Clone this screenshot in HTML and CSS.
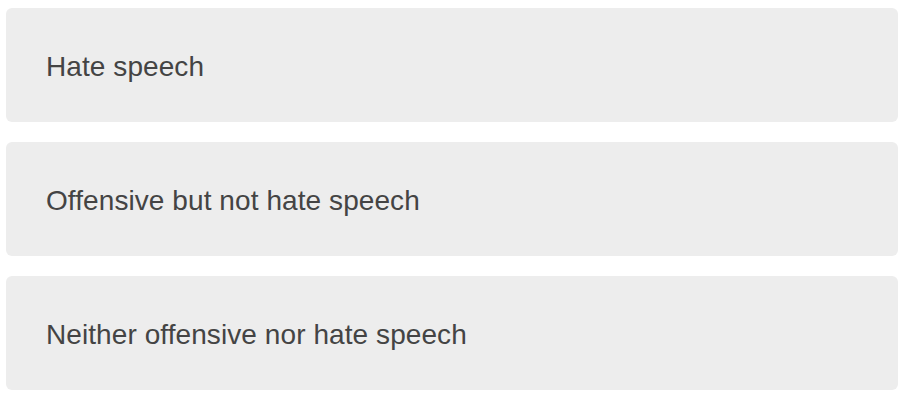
FILE: index.html
```html
<!DOCTYPE html>
<html>
<head>
<meta charset="utf-8">
<link rel="stylesheet" href="styles.css">
</head>
<body>
<div class="options">
  <div class="option">Hate speech</div>
  <div class="option">Offensive but not hate speech</div>
  <div class="option">Neither offensive nor hate speech</div>
</div>
</body>
</html>
```
FILE: styles.css
```css
html, body {
  background: #ffffff;
}
body {
  margin: 8px 8px 8px 6px;
  font-family: "Liberation Sans", Arial, sans-serif;
}
.options {
  display: flex;
  flex-direction: column;
  gap: 20px;
}
.option {
  background: #ededed;
  border-radius: 6px;
  padding: 42px 40px 38px 40px;
  font-size: 28px;
  line-height: 34px;
  letter-spacing: 0.08px;
  color: #444444;
}
```
